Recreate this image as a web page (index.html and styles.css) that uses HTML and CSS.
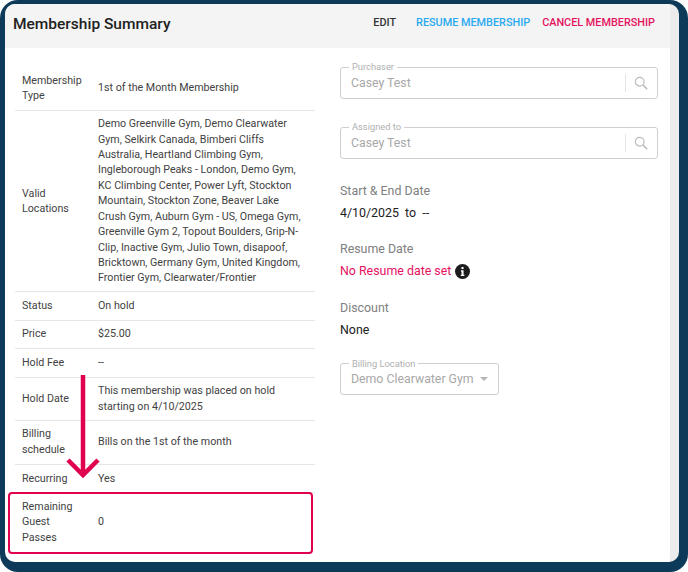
FILE: index.html
```html
<!DOCTYPE html>
<html lang="en">
<head>
<meta charset="utf-8">
<title>Membership Summary</title>
<link rel="stylesheet" href="styles.css">
</head>
<body>
<div class="frame">
  <div class="panel">
    <header class="head">
      <h1 class="title">Membership Summary</h1>
      <nav class="actions">
        <a class="act act-edit">EDIT</a>
        <a class="act act-resume">RESUME MEMBERSHIP</a>
        <a class="act act-cancel">CANCEL MEMBERSHIP</a>
      </nav>
    </header>
    <main class="body">
      <section class="left">
        <div class="row r-type"><div class="k">Membership Type</div><div class="v">1st of the Month Membership</div></div>
        <div class="row r-loc"><div class="k">Valid Locations</div><div class="v">Demo Greenville Gym, Demo Clearwater Gym, Selkirk Canada, Bimberi Cliffs Australia, Heartland Climbing Gym, Ingleborough Peaks - London, Demo Gym, KC Climbing Center, Power Lyft, Stockton Mountain, Stockton Zone, Beaver Lake Crush Gym, Auburn Gym - US, Omega Gym, Greenville Gym 2, Topout Boulders, Grip-N-Clip, Inactive Gym, Julio Town, disapoof, Bricktown, Germany Gym, United Kingdom, Frontier Gym, Clearwater/Frontier</div></div>
        <div class="row r-one"><div class="k">Status</div><div class="v">On hold</div></div>
        <div class="row r-one"><div class="k">Price</div><div class="v">$25.00</div></div>
        <div class="row r-one"><div class="k">Hold Fee</div><div class="v">--</div></div>
        <div class="row r-two"><div class="k">Hold Date</div><div class="v">This membership was placed on hold starting on 4/10/2025</div></div>
        <div class="row r-two r-bill"><div class="k">Billing schedule</div><div class="v">Bills on the 1st of the month</div></div>
        <div class="row r-one r-rec"><div class="k">Recurring</div><div class="v">Yes</div></div>
        <div class="row r-last"><div class="k">Remaining Guest Passes</div><div class="v">0</div></div>
        <div class="highlight"></div>
        <svg class="arrow" width="36" height="108" viewBox="0 0 36 108" aria-hidden="true">
          <path d="M18 0V100M3 85L18 100L33 85" fill="none" stroke="#e0004f" stroke-width="4.5"/>
        </svg>
      </section>
      <section class="right">
        <fieldset class="field f-search">
          <legend class="lg">Purchaser</legend>
          <span class="val">Casey Test</span>
          <span class="sep"></span>
          <svg class="mag" width="14" height="14" viewBox="0 0 16 16" aria-hidden="true"><circle cx="6.5" cy="6.5" r="5" fill="none" stroke="#bdbdbd" stroke-width="1.4"/><path d="M10.2 10.2L15 15" stroke="#bdbdbd" stroke-width="1.8"/></svg>
        </fieldset>
        <fieldset class="field f-search f-second">
          <legend class="lg">Assigned to</legend>
          <span class="val">Casey Test</span>
          <span class="sep"></span>
          <svg class="mag" width="14" height="14" viewBox="0 0 16 16" aria-hidden="true"><circle cx="6.5" cy="6.5" r="5" fill="none" stroke="#bdbdbd" stroke-width="1.4"/><path d="M10.2 10.2L15 15" stroke="#bdbdbd" stroke-width="1.8"/></svg>
        </fieldset>
        <div class="info i-first"><div class="il">Start &amp; End Date</div><div class="iv">4/10/2025&nbsp; to &nbsp;--</div></div>
        <div class="info"><div class="il">Resume Date</div><div class="iv iv-pink">No Resume date set
          <svg class="i-dot" width="15" height="15" viewBox="0 0 16 16" aria-hidden="true"><circle cx="8" cy="8" r="8" fill="#1c1c1e"/><rect x="6.9" y="3.2" width="2.2" height="2.2" fill="#fff"/><path d="M6.3 6.7H9.1V11.5H10V12.8H6.2V11.5H7V8H6.3Z" fill="#fff"/></svg></div></div>
        <div class="info"><div class="il">Discount</div><div class="iv">None</div></div>
        <fieldset class="field f-select">
          <legend class="lg">Billing Location</legend>
          <span class="val">Demo Clearwater Gym</span>
          <span class="caret"></span>
        </fieldset>
      </section>
    </main>
  </div>
</div>
</body>
</html>
```
FILE: styles.css
```css
* { box-sizing: border-box; }
html, body { margin: 0; padding: 0; }
body { width: 688px; height: 572px; background: #fff; font-family: Roboto, "Liberation Sans", sans-serif; overflow: hidden; }
.frame { width: 688px; height: 572px; background: #0e3a5a; border-radius: 18px; padding: 4px 9px 10px 5px; }
.panel { height: 100%; background: #fff; border-radius: 10px; overflow: hidden; border-right: 9px solid #ececec; }
.head { height: 44px; background: #f4f4f4; display: flex; align-items: flex-start; justify-content: space-between; padding: 0 15px 0 8px; }
.title { margin: 10px 0 0; font-size: 15.5px; line-height: 21px; font-weight: 500; color: #212121; }
.actions { display: flex; margin-top: 12px; }
.act { font-size: 10.85px; line-height: 14px; font-weight: 500; margin-left: 12px; }
.act-edit { color: #333; }
.act-resume { color: #29aaf0; margin-left: 20px; }
.act-cancel { color: #e5125f; }
.body { display: flex; }
.left { position: relative; width: 300px; margin: 18px 0 0 10px; flex: none; }
.row { display: flex; align-items: center; border-bottom: 1px solid #e6e6e6; font-size: 10.7px; line-height: 15.4px; color: #424242; padding: 0 11px 0 7px; }
.k { width: 76px; flex: none; padding-right: 14px; }
.v { flex: 1; }
.r-type { height: 45px; }
.r-loc { height: 181px; }
.r-one { height: 28.5px; padding-bottom: 1px; }
.r-two { height: 43.5px; }
.r-bill { padding-bottom: 1px; }
.r-rec { padding-bottom: 0; }
.r-last { height: 60px; padding-bottom: 2px; border-bottom: 0; }
.highlight { position: absolute; left: -7px; bottom: -1px; width: 305px; height: 62px; border: 2px solid #e0004f; border-radius: 4px; }
.arrow { position: absolute; left: 50px; top: 309px; }
.right { width: 318px; margin-left: 25px; padding-top: 14px; }
.field { margin: 0; padding: 0 0 5px 10px; border: 1px solid #cfcfcf; border-radius: 3px; position: relative; color: #a8a8a8; display: flex; align-items: center; }
.lg { font-size: 9.3px; line-height: 10px; padding: 0 3px; margin-left: -2px; color: #b0b0b0; }
.val { font-size: 12.3px; }
.f-search { height: 37px; }
.f-second { margin-top: 23px; }
.f-select { padding-bottom: 4px; }
.sep { position: absolute; right: 31px; top: 2px; width: 1px; height: 18px; background: #e4e4e4; }
.mag { position: absolute; right: 9px; top: 4px; }
.info { margin-top: 16.6px; }
.i-first { margin-top: 21.5px; }
.il { font-size: 12.4px; line-height: 20px; color: #808080; }
.iv { margin-top: 2px; font-size: 12.4px; line-height: 20px; color: #212121; display: flex; align-items: center; gap: 4px; }
.iv-pink { color: #e5125f; }
.f-select { width: 159px; height: 36px; margin-top: 19.3px; }
.caret { position: absolute; right: 10px; top: 8px; width: 0; height: 0; border: 4.5px solid transparent; border-top-color: #b5b5b5; }
```
